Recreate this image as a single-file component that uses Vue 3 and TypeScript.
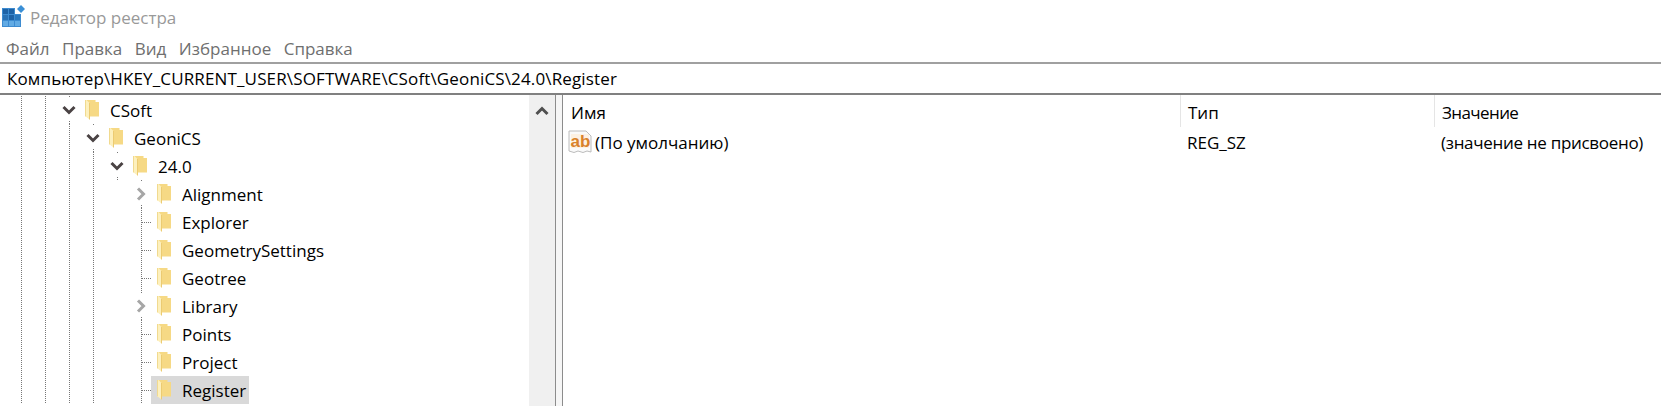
<script setup lang="ts">
type Cell = 'line' | 'blank' | 'tee' | 'open' | 'closed'
interface Row { name: string; cells: Cell[]; selected?: boolean }

const base: Cell[] = ['line', 'line', 'line', 'line', 'blank']
const rows: Row[] = [
  { name: 'CSoft', cells: ['line', 'line', 'open'] },
  { name: 'GeoniCS', cells: ['line', 'line', 'line', 'open'] },
  { name: '24.0', cells: ['line', 'line', 'line', 'line', 'open'] },
  { name: 'Alignment', cells: [...base, 'closed'] },
  { name: 'Explorer', cells: [...base, 'tee'] },
  { name: 'GeometrySettings', cells: [...base, 'tee'] },
  { name: 'Geotree', cells: [...base, 'tee'] },
  { name: 'Library', cells: [...base, 'closed'] },
  { name: 'Points', cells: [...base, 'tee'] },
  { name: 'Project', cells: [...base, 'tee'] },
  { name: 'Register', cells: [...base, 'tee'], selected: true },
]
const menu = ['Файл', 'Правка', 'Вид', 'Избранное', 'Справка']
</script>

<template>
  <div class="win">
    <div class="title">
      <svg class="app" width="24" height="24" viewBox="0 0 24 24">
        <rect x="1" y="3" width="19" height="19" fill="#3d8bd0" />
        <rect x="14" y="3" width="6" height="6" fill="#fff" />
        <rect x="2" y="4" width="5" height="5" fill="#1d62a6" />
        <rect x="8" y="4" width="5" height="5" fill="#1d62a6" />
        <rect x="2" y="10" width="5" height="5" fill="#2a72b5" />
        <rect x="8" y="10" width="5" height="5" fill="#1d62a6" />
        <rect x="14" y="10" width="5" height="5" fill="#2a78bd" />
        <rect x="2" y="16" width="5" height="5" fill="#62abe4" />
        <rect x="8" y="16" width="5" height="5" fill="#62abe4" />
        <rect x="14" y="16" width="5" height="5" fill="#62abe4" />
        <path d="M20 0l4 4-4 4-4-4z" fill="#3a8fd6" />
      </svg>
      <span>Редактор реестра</span>
    </div>
    <div class="menu"><span v-for="m in menu" :key="m">{{ m }}</span></div>
    <div class="address">Компьютер\HKEY_CURRENT_USER\SOFTWARE\CSoft\GeoniCS\24.0\Register</div>
    <div class="body">
      <div class="tree">
        <div v-for="r in rows" :key="r.name" class="row">
          <div v-for="(c, i) in r.cells" :key="i" class="cell" :class="c">
            <svg v-if="c === 'open' || c === 'closed'" width="16" height="16" viewBox="0 0 16 16">
              <path v-if="c === 'open'" d="M2.500 5l5.500 5.500 5.500-5.500" fill="none" stroke="#4a4344" stroke-width="3" />
              <path v-else d="M5 2.500l5.500 5.500-5.500 5.500" fill="none" stroke="#a6a6a6" stroke-width="3" />
            </svg>
          </div>
          <div class="item" :class="{ sel: r.selected }">
            <svg class="folder" width="16" height="22" viewBox="0 0 16 22">
              <path d="M0 1h10.500v2H14v14.500H0z" fill="#f6d985" />
              <path d="M0 1h1.500l3 3v16.500L0 17z" fill="#fdf0bd" />
              <path d="M0 1v16" stroke="#e6c362" stroke-width="1" />
              <path d="M4.500 4v16.500" stroke="#eccb72" stroke-width="1" />
            </svg>
            <span class="name">{{ r.name }}</span>
          </div>
        </div>
      </div>
      <div class="scroll">
        <svg width="16" height="16" viewBox="0 0 16 16"><path d="M2.500 11l5.500-5.500 5.500 5.500" fill="none" stroke="#505050" stroke-width="3" /></svg>
      </div>
      <div class="split"></div>
      <div class="list">
        <div class="head">
          <div class="c1">Имя</div>
          <div class="c2">Тип</div>
          <div class="c3">Значение</div>
        </div>
        <div class="val">
          <div class="c1 first">
            <svg width="24" height="24" viewBox="0 0 24 24">
              <path d="M1 1h17l5 5v16l-4-1-4 1.500-5-1.500-4 1.500-5-1.500z" fill="#fafafa" stroke="#bcbcbc" />
              <rect x="3" y="4" width="18" height="14" fill="#fdf1e2" />
              <text x="2.500" y="17" class="ab">ab</text>
            </svg>
            <span>(По умолчанию)</span>
          </div>
          <div class="c2">REG_SZ</div>
          <div class="c3 tight">(значение не присвоено)</div>
        </div>
      </div>
    </div>
  </div>
</template>

<style>
html, body { margin: 0; background: #fff; overflow: hidden; }
</style>

<style scoped>
.win {
  width: 1661px;
  height: 406px;
  overflow: hidden;
  font-family: "Open Sans", "Noto Sans", sans-serif;
  font-size: 17px;
  color: #000;
  display: flex;
  flex-direction: column;
}
.title {
  height: 34px;
  display: flex;
  align-items: center;
  gap: 5px;
  color: #999;
  font-size: 17px;
}
.app { margin-left: 1px; }
.menu {
  height: 28px;
  display: flex;
  align-items: center;
  gap: 12.500px;
  padding-left: 6px;
  color: #6f6f6f;
}
.address {
  height: 29px;
  line-height: 29px;
  padding-left: 7px;
  letter-spacing: 0.14px;
  border-top: 2px solid #a0a0a0;
  border-bottom: 2px solid #808080;
  box-sizing: content-box;
  white-space: nowrap;
}
.body { flex: 1; display: flex; min-height: 0; }
.tree { width: 529px; padding-left: 9px; box-sizing: border-box; padding-top: 1px; }
.row { height: 28px; display: flex; }
.cell { width: 24px; height: 28px; flex: none; display: flex; align-items: center; justify-content: center; }
.line, .tee, .open, .closed {
  --dots-y: repeating-linear-gradient(to bottom, #777 0 1px, transparent 1px 2px);
  --dots-x: repeating-linear-gradient(to right, #777 0 1px, transparent 1px 2px);
  background-repeat: no-repeat;
}
.line { background-image: var(--dots-y); background-size: 1px 100%; background-position: 12px 0; }
.tee {
  background-image: var(--dots-y), var(--dots-x);
  background-size: 1px 100%, 10px 1px;
  background-position: 12px 0, 13px 14px;
}
.open, .closed {
  background-image: var(--dots-y), var(--dots-y);
  background-size: 1px 1px, 1px 3px;
  background-position: 12px 0, 12px 25px;
}
.item { display: flex; align-items: center; height: 28px; padding-left: 4px; }
.item.sel { background: #d9d9d9; margin-left: -2px; padding-left: 6px; padding-right: 3px; }
.folder { flex: none; }
.name { margin-left: 9px; white-space: nowrap; }
.scroll {
  width: 26px;
  background: #f0f0f0;
  display: flex;
  justify-content: center;
  padding-top: 8px;
  box-sizing: border-box;
}
.split { width: 8px; background: #f6f6f6; border-left: 1px solid #8c8c8c; border-right: 1px solid #8c8c8c; box-sizing: border-box; }
.list { flex: 1; min-width: 0; }
.head { display: flex; height: 32px; align-items: stretch; }
.val { display: flex; height: 28px; align-items: center; margin-top: 1px; }
.c1 { width: 617px; padding-left: 8px; box-sizing: border-box; flex: none; }
.c2 { width: 254px; padding-left: 7px; box-sizing: border-box; flex: none; }
.c3 { flex: 1; padding-left: 7px; white-space: nowrap; }
.head > div { line-height: 35px; }
.head .c2, .head .c3 { border-left: 1px solid #e5e5e5; }
.head .c3 { letter-spacing: -0.6px; }
.tight { letter-spacing: -0.3px; }
.first { display: flex; align-items: center; gap: 3px; padding-left: 5px; }
.ab { font-family: "Liberation Sans", sans-serif; font-weight: 700; font-size: 17px; fill: #d9822b; }
</style>
